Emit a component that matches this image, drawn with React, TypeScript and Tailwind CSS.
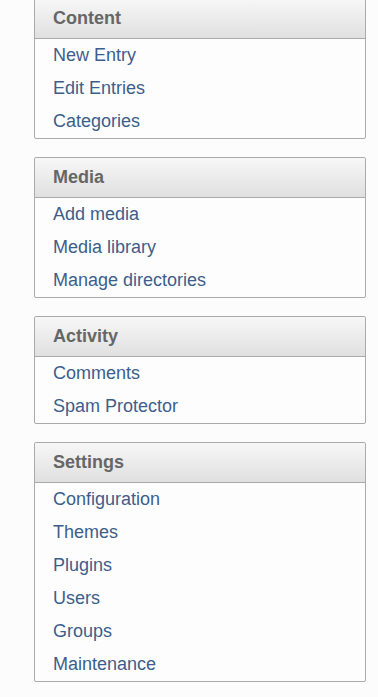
import React from 'react';

const sections = [
  { title: 'Content', links: ['New Entry', 'Edit Entries', 'Categories'] },
  { title: 'Media', links: ['Add media', 'Media library', 'Manage directories'] },
  { title: 'Activity', links: ['Comments', 'Spam Protector'] },
  { title: 'Settings', links: ['Configuration', 'Themes', 'Plugins', 'Users', 'Groups', 'Maintenance'] },
];

export default function App() {
  return (
    <div className="min-h-screen bg-[#fcfcfc] pl-[34px] pr-[12px] font-['Liberation_Sans',Arial,sans-serif]">
      <div className="mt-[-2px] flex flex-col gap-[18px]">
        {sections.map((section) => (
          <div key={section.title} className="w-[332px] overflow-hidden rounded-[2px] border border-[#aaaaaa] bg-[#fdfdfd]">
            <div className="flex h-[40px] items-center border-b border-[#aaaaaa] bg-gradient-to-b from-[#f7f7f7] to-[#e0e0e0] pl-[18px] text-[18px] font-bold text-[#666666]">
              {section.title}
            </div>
            <ul>
              {section.links.map((link) => (
                <li key={link} className="flex h-[33px] items-center pl-[18px]">
                  <a href="#" className="text-[18px] text-[#3d5d8a]">
                    {link}
                  </a>
                </li>
              ))}
            </ul>
          </div>
        ))}
      </div>
    </div>
  );
}
